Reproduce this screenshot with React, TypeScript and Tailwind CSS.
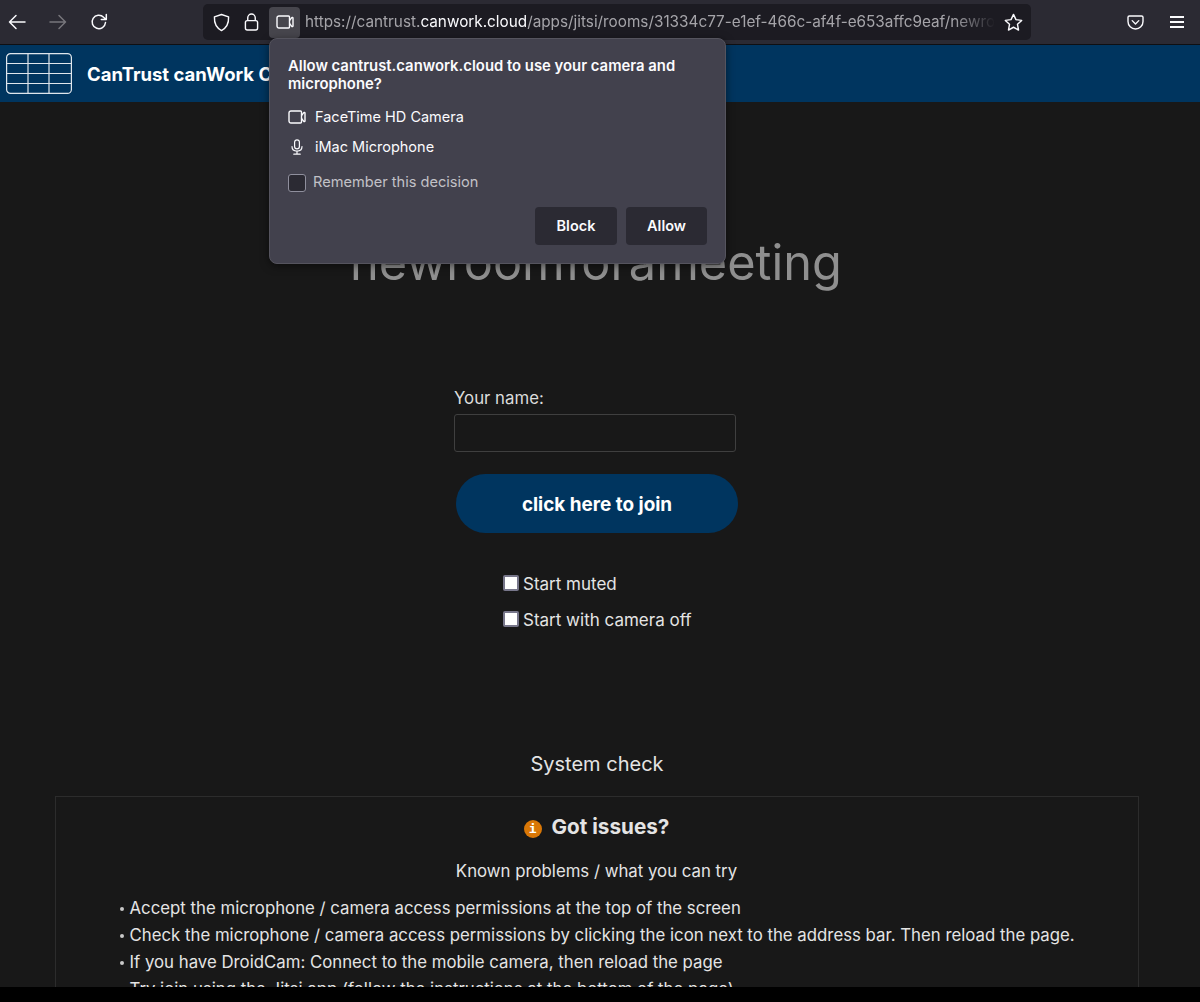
import React from 'react';

const CameraIcon = ({ className }: { className?: string }) => (
  <svg viewBox="0 0 18 14" fill="none" stroke="currentColor" strokeWidth="1.400" strokeLinejoin="round" className={className}>
    <path d="M3 1h9.500a1 1 0 0 1 1 1v10a1 1 0 0 1-1 1H3a2 2 0 0 1-2-2V3a2 2 0 0 1 2-2z" />
    <path d="M13.500 5.500 15.800 2.600c.4-.4 1.200-.1 1.200.5v7.800c0 .6-.8.900-1.200.5l-2.300-2.900" />
  </svg>
);

const MicIcon = ({ className }: { className?: string }) => (
  <svg viewBox="0 0 12 16" fill="none" stroke="currentColor" strokeWidth="1.200" strokeLinecap="round" className={className}>
    <rect x="3.600" y="0.800" width="4.800" height="9" rx="2.400" />
    <path d="M1 7.500c0 3 2.200 4.600 5 4.600s5-1.600 5-4.600M6 12.200v2.800M2.800 15.200h6.400" />
  </svg>
);

const GridLogo = () => (
  <svg viewBox="0 0 66 41" fill="none" stroke="#dfe6ec" strokeWidth="1.200" className="w-[66px] h-[41px] shrink-0">
    <rect x="0.600" y="0.600" width="64.800" height="39.800" rx="4" />
    <path d="M1 10.500h64M1 20.500h64M1 30.500h64M22 1v39M43 1v39" />
  </svg>
);

const BrowserBar = () => (
  <div className="h-[45px] shrink-0 bg-[#2b2a33] border-b border-[#0f0f12] flex items-center text-[#fbfbfe]">
    <div className="w-[203px] shrink-0 flex items-center">
      <svg viewBox="0 0 18 16" fill="none" stroke="currentColor" strokeWidth="1.500" strokeLinecap="round" strokeLinejoin="round" className="w-[18px] h-[16px] ml-[8px]">
        <path d="M17 8H1.500M8 1.500 1.500 8 8 14.500" />
      </svg>
      <svg viewBox="0 0 18 16" fill="none" stroke="#77767c" strokeWidth="1.500" strokeLinecap="round" strokeLinejoin="round" className="w-[18px] h-[16px] ml-[23px]">
        <path d="M1 8h15.500M10 1.500 16.500 8 10 14.500" />
      </svg>
      <svg viewBox="0 0 18 18" fill="none" stroke="currentColor" strokeWidth="1.500" strokeLinecap="round" strokeLinejoin="round" className="w-[18px] h-[18px] ml-[23px]">
        <path d="M15.500 9.500A6.700 6.700 0 1 1 13.600 4.200L16 6.500M16.300 1.500v5h-5" />
      </svg>
    </div>
    <div className="w-[828px] h-[36px] shrink-0 bg-[#1c1b22] rounded-[5px] flex items-center">
      <svg viewBox="0 0 18 20" fill="none" stroke="currentColor" strokeWidth="1.500" strokeLinejoin="round" className="w-[17px] h-[19px] ml-[10px] shrink-0">
        <path d="M9 1.500 16.500 4c.3 6.500-1.500 11.500-7.500 14.500C3 15.500 1.200 10.500 1.500 4L9 1.500z" />
      </svg>
      <svg viewBox="0 0 16 19" fill="none" stroke="currentColor" strokeWidth="1.500" className="w-[15px] h-[18px] ml-[14px] shrink-0">
        <rect x="1.500" y="8" width="13" height="10" rx="2" />
        <path d="M4 8V5a4 4 0 0 1 8 0v3" />
      </svg>
      <div className="w-[31px] h-[31px] ml-[10px] shrink-0 bg-[#47464d] rounded-[4px] flex items-center justify-center">
        <CameraIcon className="w-[18px] h-[14px]" />
      </div>
      <div className="ml-[5px] w-[690px] shrink-0 overflow-hidden whitespace-nowrap text-[15.300px] text-[#a5a4a9] [mask-image:linear-gradient(to_right,black_94%,transparent_100%)]">
        https://cantrust.<span className="text-[#fbfbfe]">canwork.cloud</span>/apps/jitsi/rooms/31334c77-e1ef-466c-af4f-e653affc9eaf/newroomforameeting
      </div>
      <svg viewBox="0 0 20 20" fill="none" stroke="currentColor" strokeWidth="1.500" strokeLinejoin="round" className="w-[19px] h-[19px] ml-[9px] shrink-0">
        <path d="M10 1.500 12.600 7l6 .800-4.400 4.100 1.100 6L10 15l-5.300 2.900 1.100-6L1.400 7.800l6-.800L10 1.500z" />
      </svg>
    </div>
    <svg viewBox="0 0 18 16" fill="none" stroke="currentColor" strokeWidth="1.500" strokeLinecap="round" strokeLinejoin="round" className="w-[17px] h-[15px] ml-[96px] shrink-0">
      <path d="M2.500 1h13A1.500 1.500 0 0 1 17 2.500V7a8 8 0 0 1-16 0V2.500A1.500 1.500 0 0 1 2.500 1z" />
      <path d="m5.500 6 3.500 3.500L12.500 6" />
    </svg>
    <div className="ml-[26px] w-[14px] shrink-0 flex flex-col gap-[3.500px]">
      <div className="h-[1.500px] bg-[#fbfbfe]" />
      <div className="h-[1.500px] bg-[#fbfbfe]" />
      <div className="h-[1.500px] bg-[#fbfbfe]" />
    </div>
  </div>
);

const PermissionPopup = () => (
  <div className="absolute left-[269px] top-[38px] w-[457px] h-[226px] bg-[#42414d] border border-[#55545e] rounded-[8px] shadow-[0_2px_8px_rgba(0,0,0,0.5)] px-[18px] pt-[18px] text-[#fbfbfe]">
    <div className="text-[14.850px] font-semibold leading-[18px]">
      Allow cantrust.canwork.cloud to use your camera and microphone?
    </div>
    <div className="mt-[14px] flex items-center h-[20px] text-[14.500px]">
      <CameraIcon className="w-[18px] h-[14px] shrink-0" />
      <span className="ml-[9px]">FaceTime HD Camera</span>
    </div>
    <div className="mt-[10px] flex items-center h-[20px] text-[14.500px]">
      <div className="w-[18px] flex justify-center shrink-0">
        <MicIcon className="w-[12px] h-[16px]" />
      </div>
      <span className="ml-[9px]">iMac Microphone</span>
    </div>
    <div className="mt-[17px] flex items-center h-[18px] text-[14.600px] text-[#c2c1c7]">
      <div className="w-[18px] h-[18px] shrink-0 bg-[#2b2a33] border border-[#8f8f9d] rounded-[3px]" />
      <span className="ml-[7px]">Remember this decision</span>
    </div>
    <div className="mt-[15px] flex justify-end gap-[9px]">
      <button className="w-[82px] h-[38px] bg-[#2b2a33] rounded-[4px] text-[14.500px] font-semibold text-[#fbfbfe]">Block</button>
      <button className="w-[81px] h-[38px] bg-[#2b2a33] rounded-[4px] text-[14.500px] font-semibold text-[#fbfbfe]">Allow</button>
    </div>
  </div>
);

const CheckRow = ({ label }: { label: string }) => (
  <label className="flex items-center h-[20px] text-[17px] text-[#e4e4e4]">
    <span className="w-[16px] h-[16px] mt-[-2px] shrink-0 bg-white border-2 border-[#77768a] rounded-[2px]" />
    <span className="ml-[4px] mt-[2px]">{label}</span>
  </label>
);

const issues = [
  'Accept the microphone / camera access permissions at the top of the screen',
  'Check the microphone / camera access permissions by clicking the icon next to the address bar. Then reload the page.',
  'If you have DroidCam: Connect to the mobile camera, then reload the page',
  'Try join using the Jitsi app (follow the instructions at the bottom of the page)',
];

export default function App() {
  return (
    <div className="relative w-[1200px] h-[1002px] overflow-hidden bg-[#181818] flex flex-col font-['Inter',sans-serif]">
      <BrowserBar />

      <header className="h-[57px] shrink-0 bg-[#00355f] flex items-center pl-[6px]">
        <GridLogo />
        <h1 className="ml-[15px] mt-[2px] text-[18.500px] font-bold text-white whitespace-nowrap">CanTrust canWork Cloud</h1>
      </header>

      <main className="flex-1 min-h-0 overflow-hidden flex flex-col items-center">
        <h2 className="mt-[132px] h-[58px] text-[48.700px] leading-[58px] font-normal text-[#8f8f8f] ml-[-8px]">newroomforameeting</h2>

        <div className="mt-[95px] w-[284px] ml-[-8px]">
          <div className="text-[16.800px] leading-[22px] text-[#dcdcdc]">Your name:</div>
          <input className="mt-[5px] block w-[282px] h-[38px] bg-transparent border border-[#3f3f3f] rounded-[3px]" />
          <button className="mt-[22px] ml-[2px] w-[282px] h-[59px] pt-[3px] rounded-full bg-[#00355f] text-[18.900px] font-bold text-white">click here to join</button>
          <div className="mt-[41px] ml-[49px] flex flex-col gap-[16px]">
            <CheckRow label="Start muted" />
            <CheckRow label="Start with camera off" />
          </div>
        </div>

        <div className="mt-[122px] text-[20px] leading-[24px] text-[#e4e4e4] ml-[-6px]">System check</div>

        <section className="mt-[20px] ml-[-7px] w-[1084px] border border-[#2c2c2c] pt-[17px] px-[63px]">
          <div className="flex items-center justify-center gap-[10px]">
            <span className="w-[18px] h-[18px] mt-[3px] rounded-full bg-[#d97706] flex items-center justify-center font-['DejaVu_Sans_Mono',monospace] text-[13px] font-bold leading-none text-white">i</span>
            <span className="text-[20.700px] leading-[26px] font-bold text-[#e4e4e4]">Got issues?</span>
          </div>
          <div className="mt-[19px] text-center text-[16.800px] leading-[24px] text-[#e4e4e4]">Known problems / what you can try</div>
          <ul className="mt-[12px] ml-[1px]">
            {issues.map((issue) => (
              <li key={issue} className="flex h-[27px] items-center text-[16.800px] text-[#e4e4e4] whitespace-nowrap">
                <span className="w-[4px] h-[4px] rounded-full bg-[#c8c8c8] shrink-0" />
                <span className="ml-[6px]">{issue}</span>
              </li>
            ))}
          </ul>
        </section>
      </main>

      <div className="h-[15px] shrink-0 bg-black" />

      <PermissionPopup />
    </div>
  );
}
